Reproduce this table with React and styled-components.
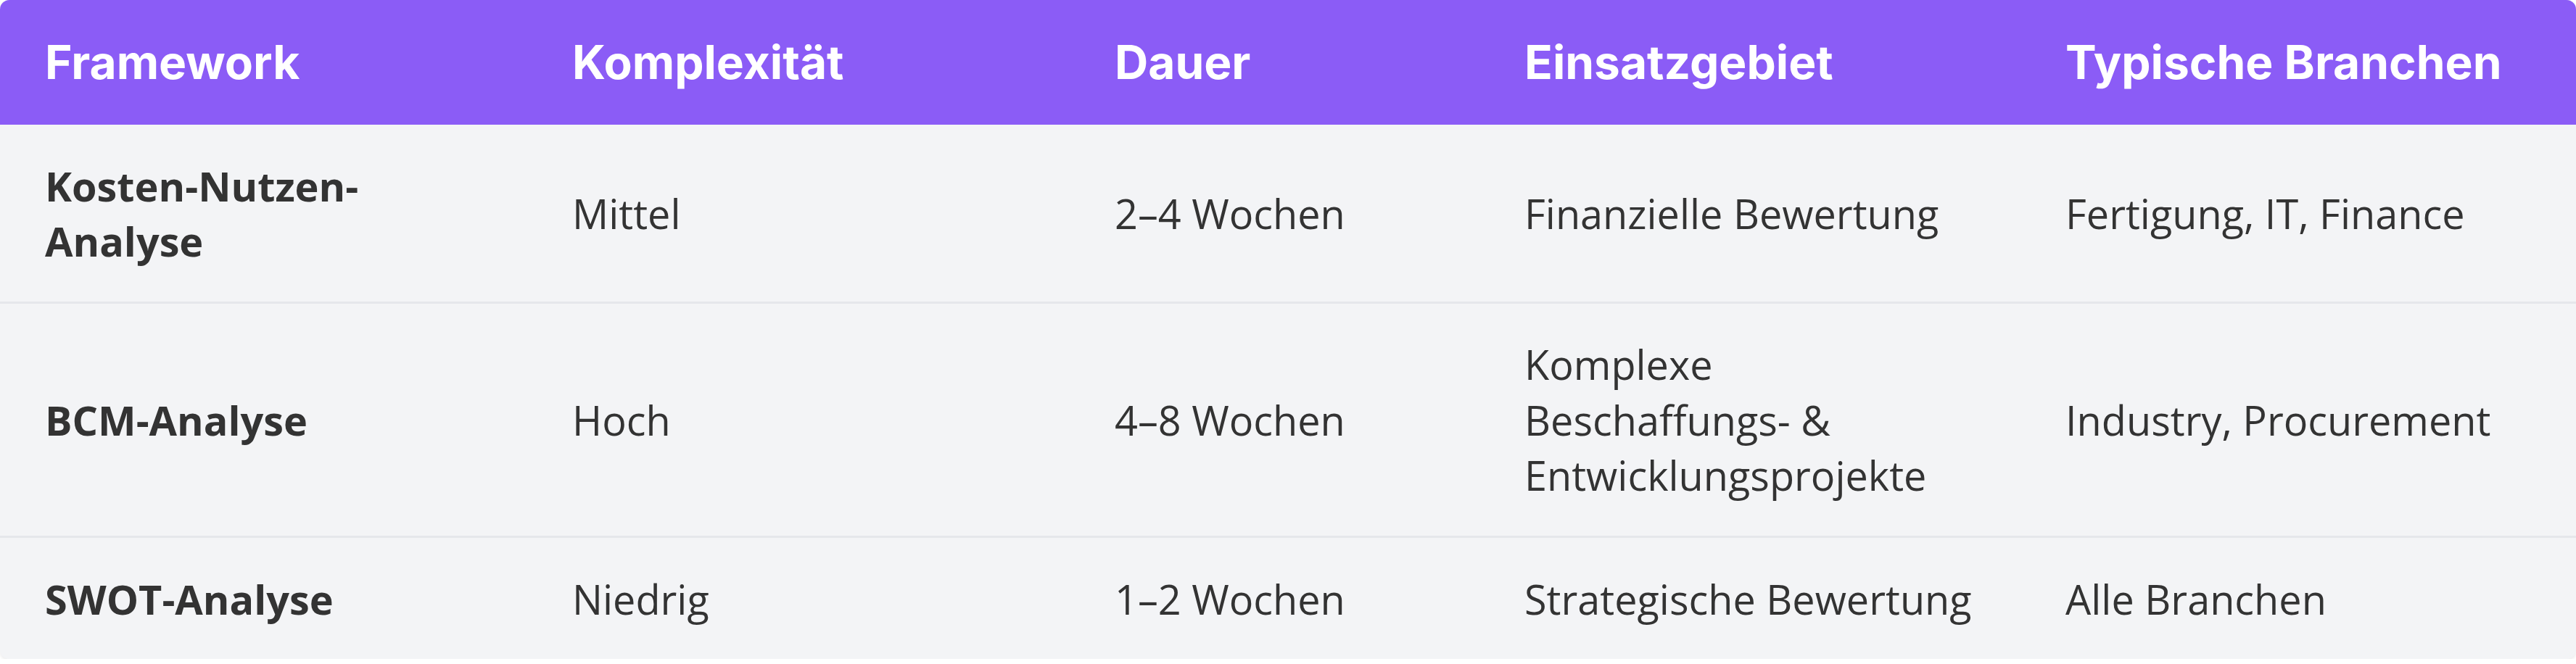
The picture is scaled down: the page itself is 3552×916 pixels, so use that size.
import React from "react";
import styled, { createGlobalStyle } from "styled-components";

const GlobalStyle = createGlobalStyle`
  html, body {
    margin: 0;
    padding: 0;
    background: #ffffff;
  }
  body {
    font-family: "Open Sans", "Noto Sans", sans-serif;
  }
`;

const Card = styled.div`
  width: 3552px;
  border-radius: 13px;
  overflow: hidden;
  background: #f3f4f6;
  box-shadow: 0 2px 5px rgba(0, 0, 0, 0.09);
`;

const Table = styled.table`
  width: 100%;
  border-collapse: collapse;
  table-layout: fixed;
`;

const HeadRow = styled.tr`
  background: #8b5cf6;
`;

const HeadCell = styled.th`
  padding: 45px 50px 45px 62px;
  text-align: left;
  vertical-align: middle;
  font-family: "Inter", "Liberation Sans", sans-serif;
  font-weight: 700;
  font-size: 64px;
  line-height: 82px;
  color: #ffffff;
`;

const BodyRow = styled.tr`
  background: #f3f4f6;
  border-bottom: ${(p) => (p.$last ? "none" : "3px solid #e5e7eb")};
`;

const Cell = styled.td`
  padding: 45.5px 50px 45.5px 62px;
  text-align: left;
  vertical-align: middle;
  font-family: "Open Sans", "Noto Sans", sans-serif;
  font-size: 55.8px;
  line-height: 76.4px;
  font-weight: ${(p) => (p.$strong ? 700 : 400)};
  color: #333333;
`;

const widths = [727, 748, 565, 746, 766];

const headers = [
  "Framework",
  "Komplexität",
  "Dauer",
  "Einsatzgebiet",
  "Typische Branchen",
];

const rows = [
  [
    "Kosten-Nutzen-Analyse",
    "Mittel",
    "2–4 Wochen",
    "Finanzielle Bewertung",
    "Fertigung, IT, Finance",
  ],
  [
    "BCM-Analyse",
    "Hoch",
    "4–8 Wochen",
    "Komplexe Beschaffungs- & Entwicklungsprojekte",
    "Industry, Procurement",
  ],
  [
    "SWOT-Analyse",
    "Niedrig",
    "1–2 Wochen",
    "Strategische Bewertung",
    "Alle Branchen",
  ],
];

export default function App() {
  return (
    <>
      <GlobalStyle />
      <Card>
        <Table>
          <colgroup>
            {widths.map((w, i) => (
              <col key={i} style={{ width: `${w}px` }} />
            ))}
          </colgroup>
          <thead>
            <HeadRow>
              {headers.map((h) => (
                <HeadCell key={h}>{h}</HeadCell>
              ))}
            </HeadRow>
          </thead>
          <tbody>
            {rows.map((r, ri) => (
              <BodyRow key={ri} $last={ri === rows.length - 1}>
                {r.map((c, ci) => (
                  <Cell key={ci} $strong={ci === 0}>
                    {c}
                  </Cell>
                ))}
              </BodyRow>
            ))}
          </tbody>
        </Table>
      </Card>
    </>
  );
}
